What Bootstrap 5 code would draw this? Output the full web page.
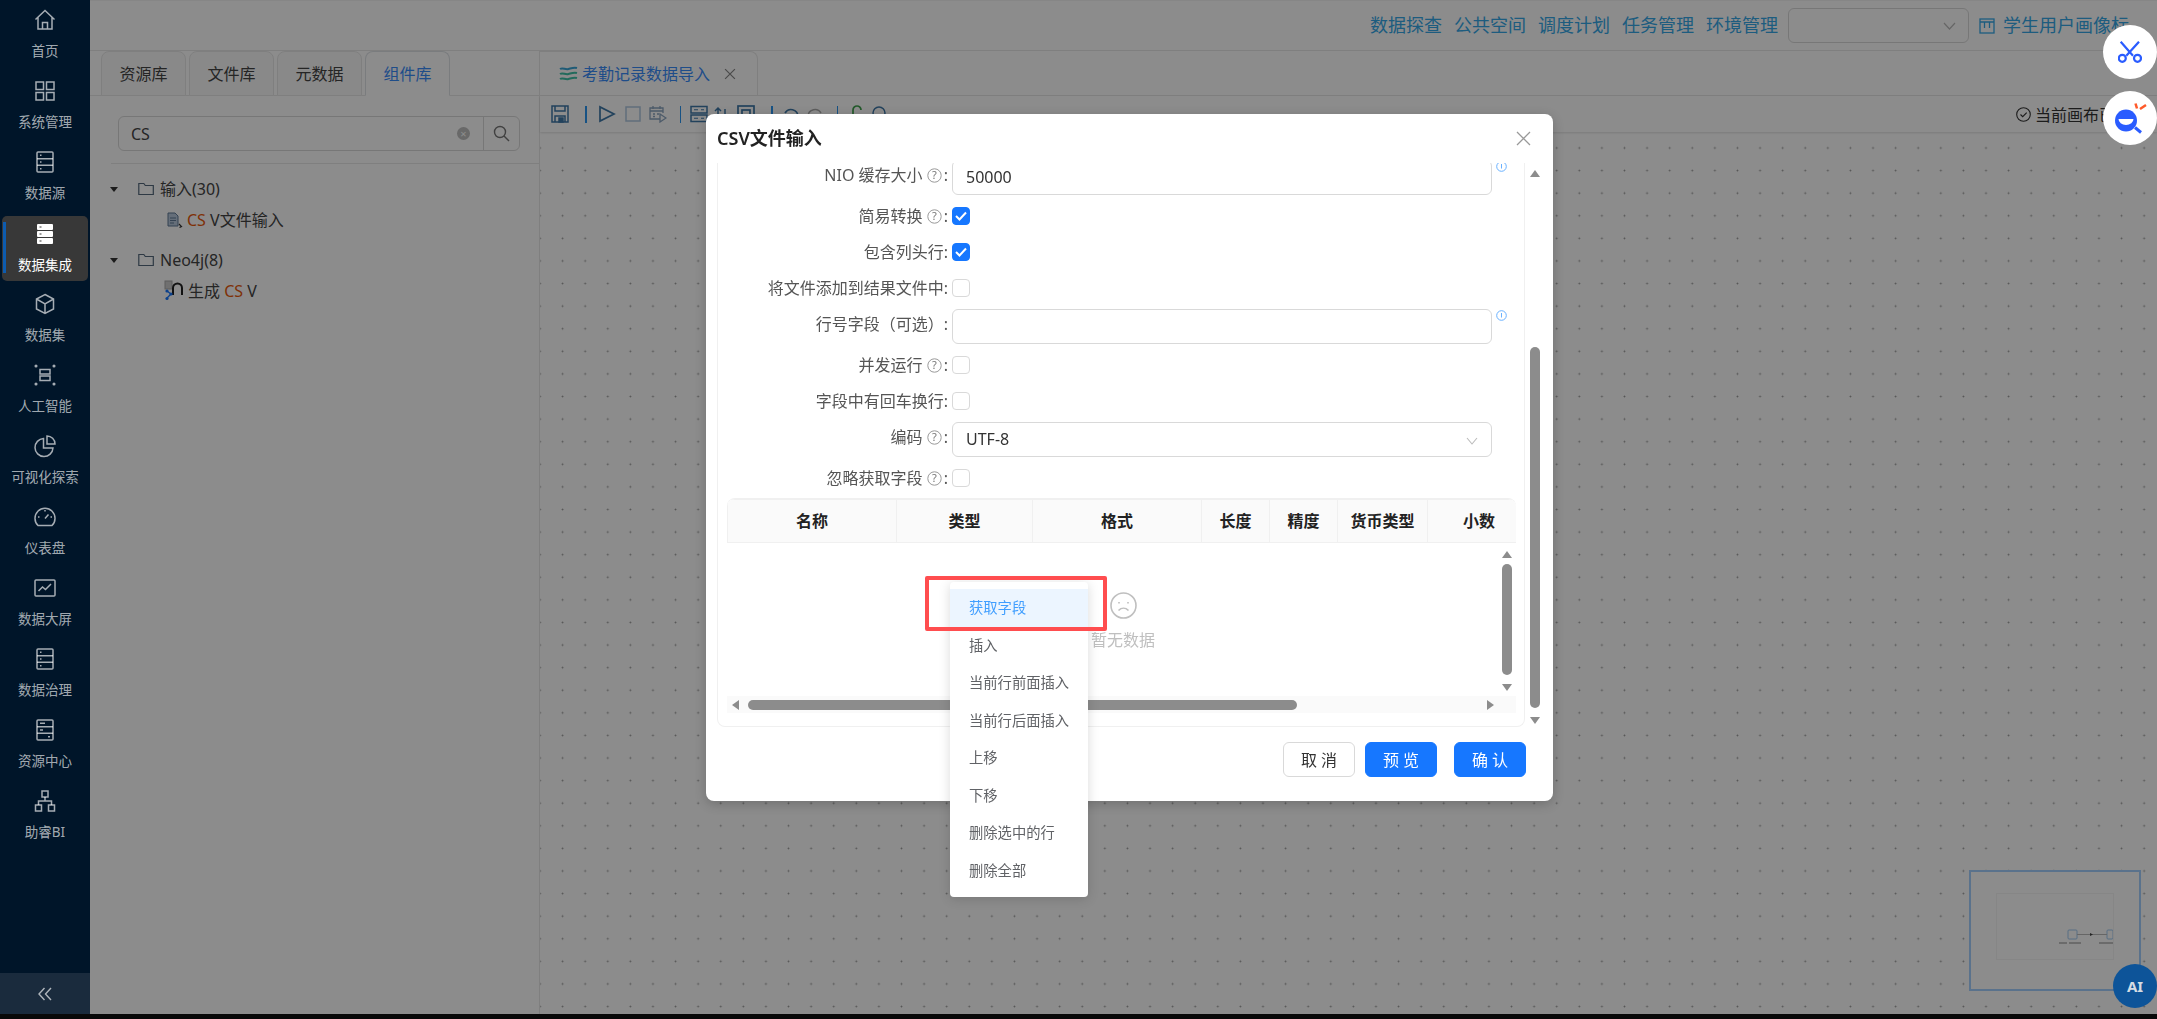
<!DOCTYPE html>
<html lang="zh">
<head>
<meta charset="UTF-8">
<title>CSV文件输入</title>
<link href="https://cdn.jsdelivr.net/npm/bootstrap@5.3.2/dist/css/bootstrap.min.css" rel="stylesheet">
<style>
  html, body { height: 100%; }
  body { font-family: "Noto Sans", "Noto Sans CJK SC", sans-serif; font-size: 16px; background: #121212; overflow: hidden; color: #333; }
  .shell { height: 1014px; }

  /* left menu sits above the dialog mask */
  .side-menu { width: 90px; background: #001529; position: relative; z-index: 1051; }
  .side-item { height: 71px; padding-top: 8px; color: rgba(255,255,255,.65); font-size: 13.5px; line-height: 18px; margin: 0 2px; border-radius: 5px; position: relative; white-space: nowrap; }
  .side-item svg { display: block; width: 24px; height: 24px; margin-bottom: 10px; }
  .side-item.on { color: #fff; background: #383838; height: 65px; margin-top: 3px; margin-bottom: 3px; padding-top: 6px; }
  .side-item.on::before { content: ""; position: absolute; left: 1px; top: 6px; bottom: 8px; width: 3px; background: #0d5cb0; }
  .side-fold { height: 41px; background: #1a2b3d; color: rgba(255,255,255,.65); }

  .main-area { background: #fff; border-top: 1px solid #f5f5f5; min-width: 0; }
  .top-bar { height: 50px; padding-right: 28px; border-bottom: 1px solid #e8e8e8; color: #35a8e8; font-size: 18px; gap: 12px; white-space: nowrap; }
  .top-select { width: 181px; height: 35px; margin: 0 -2px; border: 1px solid #d9d9d9; border-radius: 6px; padding-right: 12px; }

  .left-pane { width: 450px; border-right: 1px solid #e8e8e8; }
  .lib-tabs { padding-left: 11px; gap: 3px; height: 45px; --bs-nav-tabs-border-color: #e8e8e8; }
  .lib-tabs .nav-link { width: 85px; height: 45px; margin: 0; padding: 0; line-height: 44px; text-align: center; font-size: 16px; color: #444; background: #fafafa; border-color: #e8e8e8; border-radius: 8px 8px 0 0; }
  .lib-tabs .nav-link.active { color: #3a8cfa; background: #fff; border-bottom-color: #fff; }
  .search-line { margin: 20px 19px 0 28px; height: 35px; border: 1px solid #d9d9d9; border-radius: 6px; color: #444; }
  .search-line .clear-dot { width: 13px; height: 13px; border-radius: 50%; background: #bfbfbf; color: #fff; font-size: 11px; line-height: 13px; text-align: center; margin-right: 13px; }
  .search-btn { width: 36px; height: 100%; border-left: 1px solid #d9d9d9; }
  .tree-box { margin: 12px 0 0 21px; border-top: 1px solid #e8e8e8; padding-top: 12px; }
  .tree-row { height: 26px; line-height: 26px; color: #444; white-space: nowrap; }
  .tree-row.kid { margin-top: 5px; padding-left: 56px; }
  .tree-row.kid.neo { padding-left: 53px; }
  .tree-group { margin-bottom: 14px; }
  .caret-down { width: 0; height: 0; border: 4px solid transparent; border-top: 5px solid #333; border-bottom: 0; margin: 0 20px 0 -1px; }
  .folder-mark { margin-right: 6px; }
  .hit { color: #e8590c; }

  .edit-pane { min-width: 0; }
  .edit-tabs { height: 45px; border-bottom: 1px solid #e8e8e8; }
  .edit-tab { width: 218px; height: 44px; border: 1px solid #e8e8e8; border-bottom: 0; border-left: 0; border-radius: 0 8px 0 0; color: #3a8cfa; padding: 1px 0 0 19px; gap: 14px; }
  .tool-bar { height: 36px; padding-left: 11px; box-shadow: 0 1px 2px rgba(0,0,0,.12); color: #3f78a8; }
  .tool-sep { width: 1.5px; height: 17px; background: #2b96f0; }
  .tg6 { margin-left: 6px; } .tg8 { margin-left: 8px; } .tg9 { margin-left: 9px; }
  .tg11 { margin-left: 11px; } .tg13 { margin-left: 13px; } .tg16 { margin-left: 16px; }
  .saved-tip { margin-left: auto; padding: 1px 10px 0 0; color: #333; }
  .canvas-box { background-image: radial-gradient(circle, #9a9a9a 0.8px, transparent 1.1px); background-size: 22.6px 22.6px; background-position: -11.3px 4.7px; position: relative; }
  .mini-map { position: absolute; left: 1429px; top: 738px; width: 172px; height: 121px; border: 2px solid #a4d0ff; background: #fff; }
  .mini-sheet { width: 118px; height: 67px; margin: 21px 0 0 25px; border: 1px solid #f5f5f5; position: relative; }
  .mini-flow { position: absolute; left: 60px; top: 34px; }
  .ai-btn { position: absolute; left: 1573px; top: 832px; width: 44px; height: 44px; border-radius: 50%; background: #0d5499; color: #d5dce3; font-weight: 700; font-size: 15px; z-index: 1051; }
  .foot-strip { height: 5px; }

  .float-round { position: fixed; left: 2103px; width: 54px; height: 54px; border-radius: 50%; background: #fff; z-index: 1056; }

  /* dialog */
  .modal-backdrop { --bs-backdrop-opacity: .45; }
  .modal { overflow: hidden !important; }
  .modal-dialog.csv-dialog { max-width: none; width: 847px; margin: 114px 0 0 706px; }
  .csv-dialog .modal-content { height: 687px; border: 0; border-radius: 8px; box-shadow: 0 3px 12px rgba(0,0,0,.2); }
  .csv-dialog .modal-header { height: 49px; padding: 0 22px 0 11px; border: 0; justify-content: space-between; }
  .csv-dialog .modal-title { font-size: 18px; font-weight: 600; color: #222; }
  .csv-dialog .modal-body { padding: 0 9px 0 11px; height: 564px; flex: none; }
  .csv-dialog .modal-footer { height: 74px; padding: 15px 27px 0 0; border: 0; align-items: flex-start; gap: 10px; }
  .csv-dialog .modal-footer > * { margin: 0; }
  .csv-dialog .modal-footer > .btn-gap { margin-right: 7px; }
  .act-btn { width: 72px; height: 35px; padding: 0; font-size: 16px; border-radius: 6px; --bs-btn-bg: #1677ff; --bs-btn-border-color: #1677ff; }
  .act-btn.btn-light { background: #fff; border-color: #d9d9d9; color: #333; }

  .form-panel { width: 808px; border: 1px solid #f0f0f0; border-top: 0; border-radius: 0 0 8px 8px; overflow: hidden; }
  .form-flow { margin-top: -6px; }
  .field-row { height: 36px; }
  .field-row.tall { height: 41px; }
  .field-label { width: 230px; margin-right: 4px; flex: none; color: #555; text-align: right; white-space: nowrap; }
  .field-row.tall .field-label { padding-bottom: 5px; }
  .field-ctl { width: 540px; flex: none; }
  .fake-input { height: 35px; border: 1px solid #d9d9d9; border-radius: 6px; padding: 4px 13px 0; color: #333; }
  .info-mark { align-self: flex-start; margin: 4px 0 0 4px; }
  .help-mark { margin: -2px 2px 0 0; }
  .check-box { width: 18px; height: 18px; border: 1px solid #d9d9d9; border-radius: 4px; background: #fff; }
  .check-box.on { background: #1677ff; border-color: #1677ff; }

  .grid-wrap { margin: 2px 0 0 9px; width: 789px; height: 215px; border-radius: 8px 8px 0 0; overflow: hidden; border-top: 1px solid #f0f0f0; position: relative; }
  .grid-wrap .table { table-layout: fixed; width: 880px; margin: 0; --bs-table-border-color: #f0f0f0; }
  .grid-wrap th { height: 43px; background: #fafafa; padding: 0; text-align: center; vertical-align: middle; font-weight: 600; font-size: 16px; color: #222; }
  .last-col { width: 102px; }
  .empty-area { height: 171px; position: relative; }
  .empty-hint { position: absolute; left: 373px; top: 49px; width: 46px; color: #bfbfbf; white-space: nowrap; gap: 9px; }
  .bar-v { position: absolute; right: 0; top: 0; width: 18px; padding-top: 8px; }
  .bar-v .thumb-v { height: 111px; margin: 6px 0 9px; }
  .thumb-v { width: 10px; background: #8c8c8c; border-radius: 5px; }
  .bar-h { position: absolute; left: 0; right: 0; bottom: 0; height: 18px; background: #fafafa; padding: 0 22px 0 5px; }
  .thumb-h { width: 549px; height: 10px; background: #8c8c8c; border-radius: 5px; margin-left: 9px; }
  .arr { width: 0; height: 0; border: 5px solid transparent; }
  .arr.up { border-bottom: 7px solid #8c8c8c; border-top: 0; }
  .arr.dn { border-top: 7px solid #8c8c8c; border-bottom: 0; }
  .arr.lf { border-right: 7px solid #8c8c8c; border-left: 0; }
  .arr.rt { border-left: 7px solid #8c8c8c; border-right: 0; }
  .outer-scroll { width: 18px; margin-left: 1px; padding: 7px 0 3px; }
  .outer-scroll .thumb-v { margin-top: 170px; height: 361px; }

  .context-list { position: absolute; left: 244px; top: 468px; width: 138px; min-width: 0; display: block; padding: 7px 0 8px; border: 0; border-radius: 4px; box-shadow: 0 2px 12px rgba(0,0,0,.15); z-index: 5; }
  .context-list .dropdown-item { height: 37.5px; line-height: 37.5px; padding: 0 0 0 19px; font-size: 14.3px; color: #606266; }
  .context-list .dropdown-item.active { background: #ecf5ff; color: #409eff; }
  .red-mark { position: absolute; left: 219px; top: 462px; width: 182px; height: 55px; border: 4px solid #ff4d4f; border-radius: 2px; z-index: 6; }
</style>
</head>
<body>
<svg class="d-none">
  <symbol id="ico-help" viewBox="0 0 15 15"><circle cx="7.5" cy="7.5" r="6.7" fill="none" stroke="#999"/><text x="7.5" y="11.3" text-anchor="middle" font-size="11" fill="#777">?</text></symbol>
  <symbol id="ico-info" viewBox="0 0 11 11"><circle cx="5.5" cy="5.5" r="4.8" fill="none" stroke="#69b1ff"/><path d="M5.5 3v4.5" stroke="#69b1ff"/></symbol>
  <symbol id="ico-tick" viewBox="0 0 12 10"><path d="m1 5 3.5 3.5L11 1.500" fill="none" stroke="#fff" stroke-width="2"/></symbol>
  <symbol id="ico-folder" viewBox="0 0 16 14"><path d="M.8 12.500V1.500h5l1.500 2h8v9z" fill="none" stroke="#55697d" stroke-width="1.200"/></symbol>
  <symbol id="ico-server" viewBox="0 0 24 24"><rect x="4" y="2" width="16" height="20" rx="1" fill="none" stroke="currentColor" stroke-width="1.5"/><path d="M4 8.700h16M4 15.300h16M7 5.300h1.500M7 12h1.500M7 18.700h1.500" stroke="currentColor" stroke-width="1.5"/></symbol>
</svg>

<div class="shell d-flex">

  <nav class="side-menu d-flex flex-column flex-shrink-0">
    <div class="flex-grow-1">
      <div class="side-item d-flex flex-column align-items-center">
        <svg viewBox="0 0 24 24" fill="none" stroke="currentColor" stroke-width="1.5"><path d="M2.500 11.500 12 2.500l9.500 9M5 9.500V21h14V9.500M9.500 21v-6.500h5V21"/></svg>首页</div>
      <div class="side-item d-flex flex-column align-items-center">
        <svg viewBox="0 0 24 24" fill="none" stroke="currentColor" stroke-width="1.5"><rect x="3" y="3" width="7.500" height="7.500"/><rect x="13.500" y="3" width="7.500" height="7.500"/><rect x="3" y="13.500" width="7.500" height="7.500"/><rect x="13.500" y="13.500" width="7.500" height="7.500"/></svg>系统管理</div>
      <div class="side-item d-flex flex-column align-items-center">
        <svg viewBox="0 0 24 24"><use href="#ico-server"/></svg>数据源</div>
      <div class="side-item on d-flex flex-column align-items-center">
        <svg viewBox="0 0 24 24"><rect x="4" y="2" width="16" height="6" rx="1" fill="#fff"/><rect x="4" y="9" width="16" height="6" rx="1" fill="#fff"/><rect x="4" y="16" width="16" height="6" rx="1" fill="#fff"/><path d="M6.500 5h2M6.500 12h2M6.500 19h2" stroke="#383838" stroke-width="1.200"/></svg>数据集成</div>
      <div class="side-item d-flex flex-column align-items-center">
        <svg viewBox="0 0 24 24" fill="none" stroke="currentColor" stroke-width="1.5"><path d="M12 2.500 20.500 7v10L12 21.500 3.500 17V7zM3.500 7 12 12l8.500-5M12 12v9.500"/></svg>数据集</div>
      <div class="side-item d-flex flex-column align-items-center">
        <svg viewBox="0 0 24 24" fill="none" stroke="currentColor" stroke-width="1.5"><rect x="7" y="6.500" width="10" height="4.500"/><rect x="7" y="13" width="10" height="4.500"/><circle cx="3" cy="3" r=".8"/><circle cx="21" cy="3" r=".8"/><circle cx="3" cy="21" r=".8"/><circle cx="21" cy="21" r=".8"/></svg>人工智能</div>
      <div class="side-item d-flex flex-column align-items-center">
        <svg viewBox="0 0 24 24" fill="none" stroke="currentColor" stroke-width="1.5"><path d="M10.500 4.500a9 9 0 1 0 9.500 9.500h-9.500zM14 2v8h8a8 8 0 0 0-8-8z"/></svg>可视化探索</div>
      <div class="side-item d-flex flex-column align-items-center">
        <svg viewBox="0 0 24 24" fill="none" stroke="currentColor" stroke-width="1.5"><path d="M5 20.500a10 10 0 1 1 14 0zM12 13.500l3.500-4M12 5v1.500M5 12h1.500M17.500 12H19"/></svg>仪表盘</div>
      <div class="side-item d-flex flex-column align-items-center">
        <svg viewBox="0 0 24 24" fill="none" stroke="currentColor" stroke-width="1.5"><rect x="2" y="4" width="20" height="16" rx="1"/><path d="m5.500 15 4-4 3 2.500 5.500-5.500"/></svg>数据大屏</div>
      <div class="side-item d-flex flex-column align-items-center">
        <svg viewBox="0 0 24 24"><use href="#ico-server"/></svg>数据治理</div>
      <div class="side-item d-flex flex-column align-items-center">
        <svg viewBox="0 0 24 24" fill="none" stroke="currentColor" stroke-width="1.5"><rect x="4" y="2" width="16" height="20" rx="1"/><path d="M4 8.700h16M4 15.300h16M7 5.300h5M7 12h3M15 18.700h2"/></svg>资源中心</div>
      <div class="side-item d-flex flex-column align-items-center">
        <svg viewBox="0 0 24 24" fill="none" stroke="currentColor" stroke-width="1.5"><rect x="9" y="2" width="6" height="6"/><rect x="2.500" y="16" width="6" height="6"/><rect x="15.500" y="16" width="6" height="6"/><path d="M12 8v4M5.500 16v-4h13v4"/></svg>助睿BI</div>
    </div>
    <div class="side-fold d-flex align-items-center justify-content-center">
      <svg width="14" height="14" viewBox="0 0 14 14" fill="none" stroke="currentColor" stroke-width="1.4"><path d="M6.500 1 1 7l5.500 6M13 1 7.500 7l5.500 6"/></svg>
    </div>
  </nav>

  <div class="main-area flex-grow-1 d-flex flex-column">
    <header class="top-bar d-flex align-items-center justify-content-end flex-shrink-0">
      <span>数据探查</span><span>公共空间</span><span>调度计划</span><span>任务管理</span><span>环境管理</span>
      <div class="top-select d-flex align-items-center justify-content-end">
        <svg width="13" height="13" viewBox="0 0 13 13" fill="none" stroke="#bbb" stroke-width="1.2"><path d="m1 4 5.500 6L12 4"/></svg>
      </div>
      <span class="d-flex align-items-center gap-2">
        <svg width="16" height="16" viewBox="0 0 16 16" fill="none" stroke="currentColor" stroke-width="1.3"><rect x="1" y="1" width="14" height="14"/><path d="M1 4h14M5.500 4v6M10.500 4v6"/></svg>学生用户画像标</span>
    </header>

    <div class="d-flex flex-grow-1" style="min-height:0">
      <aside class="left-pane d-flex flex-column flex-shrink-0">
        <ul class="nav nav-tabs lib-tabs">
          <li class="nav-item"><a class="nav-link" href="#">资源库</a></li>
          <li class="nav-item"><a class="nav-link" href="#">文件库</a></li>
          <li class="nav-item"><a class="nav-link" href="#">元数据</a></li>
          <li class="nav-item"><a class="nav-link active" href="#">组件库</a></li>
        </ul>
        <div class="search-line d-flex align-items-center">
          <span class="ps-2 ms-1 flex-grow-1">CS</span>
          <span class="clear-dot">×</span>
          <span class="search-btn d-flex align-items-center justify-content-center">
            <svg width="17" height="17" viewBox="0 0 17 17" fill="none" stroke="#777" stroke-width="1.4"><circle cx="7" cy="7" r="5.500"/><path d="m11 11 5 5"/></svg>
          </span>
        </div>
        <div class="tree-box">
          <div class="tree-group">
            <div class="tree-row d-flex align-items-center">
              <span class="caret-down"></span>
              <svg class="folder-mark" width="16" height="14"><use href="#ico-folder"/></svg>输入(30)</div>
            <div class="tree-row kid d-flex align-items-center">
              <svg class="me-1" width="16" height="16" viewBox="0 0 16 16"><path d="M1 1h7l3 3v10H1z" fill="#b8c8dc" stroke="#5f7896"/><path d="M3 6h6M3 8.500h6M3 11h4" stroke="#5f7896"/><path d="m12 12 2.500 2.500-2 1" fill="none" stroke="#333" stroke-width="1.200"/></svg><span class="hit">CS</span>&nbsp;V文件输入</div>
          </div>
          <div class="tree-group">
            <div class="tree-row d-flex align-items-center">
              <span class="caret-down"></span>
              <svg class="folder-mark" width="16" height="14"><use href="#ico-folder"/></svg>Neo4j(8)</div>
            <div class="tree-row kid neo d-flex align-items-center">
              <svg class="me-1" width="20" height="22" viewBox="0 0 20 22"><rect x="1" y="1" width="7" height="8" fill="#ccc" stroke="#aaa"/><path d="M9 15V8a4.500 4.500 0 0 1 9 0v7" fill="none" stroke="#222" stroke-width="2"/><path d="m7 14-4-3M7 14l-4 4" stroke="#1677ff" stroke-width="1.300"/><circle cx="3" cy="11" r="1.600" fill="#1677ff"/><circle cx="3" cy="18.500" r="1.600" fill="#1677ff"/><circle cx="7" cy="14" r="1.600" fill="#1677ff"/></svg>生成&nbsp;<span class="hit">CS</span>&nbsp;V</div>
          </div>
        </div>
      </aside>

      <section class="edit-pane flex-grow-1 d-flex flex-column">
        <div class="edit-tabs flex-shrink-0">
          <div class="edit-tab d-flex align-items-center">
            <span class="d-flex align-items-center gap-1 text-nowrap">
              <svg width="19" height="16" viewBox="0 0 19 16" fill="none" stroke-width="2"><path d="M1 3c3-2 5 1 8.500 0S15 1 18 2" stroke="#3aa7d8"/><path d="M1 8c3-2 5 1 8.500 0S15 6 18 7" stroke="#3fc3a8"/><path d="M1 13c3-2 5 1 8.500 0S15 11 18 12" stroke="#3fc3a8"/></svg>考勤记录数据导入</span>
            <svg width="12" height="12" viewBox="0 0 11 11" stroke="#888" stroke-width="1.100"><path d="m1 1 9 9M10 1l-9 9"/></svg>
          </div>
        </div>
        <div class="tool-bar d-flex align-items-center flex-shrink-0">
          <svg width="18" height="18" viewBox="0 0 18 18" fill="none" stroke="currentColor" stroke-width="1.500"><path d="M1 1h16v16H1zM4 1v5h10V1M4 17v-6h10v6"/><rect x="8" y="13" width="4" height="4" fill="currentColor"/></svg>
          <span class="tool-sep tg16"></span>
          <svg class="tg11" width="18" height="18" viewBox="0 0 18 18" fill="none" stroke="currentColor" stroke-width="1.700"><path d="M2 2v14l14-7z"/></svg>
          <svg class="tg9" width="16" height="16" viewBox="0 0 16 16" fill="none" stroke="#b0c8e0" stroke-width="1.500"><rect x="1" y="1" width="14" height="14"/></svg>
          <svg class="tg8" width="18" height="18" viewBox="0 0 18 18" fill="none" stroke="#8aa4bf" stroke-width="1.300"><path d="M11 14H1V3h13v5M1 6h13M4 1v3M11 1v3M4 9h2M8 9h2M4 11.500h2"/><path d="m11 9 6 4-6 4z"/></svg>
          <span class="tool-sep tg13"></span>
          <svg class="tg9" width="18" height="18" viewBox="0 0 18 18" fill="none" stroke="currentColor" stroke-width="1.500"><rect x="1" y="1.500" width="16" height="6.500"/><rect x="1" y="10" width="16" height="6.500"/><path d="M4 4.700h4M11 4.700h3M4 13.200h4M11 13.200h3" stroke-width="1.100"/></svg>
          <svg class="tg6" width="15" height="18" viewBox="0 0 15 18" fill="none" stroke="currentColor" stroke-width="1.500"><path d="M4 17V3M1 6l3-3 3 3M11 4v10"/></svg>
          <svg class="tg8" width="18" height="18" viewBox="0 0 18 18" fill="none" stroke="currentColor" stroke-width="1.700"><rect x="1" y="1" width="16" height="16"/><rect x="5" y="5" width="8" height="8"/></svg>
          <span class="tool-sep tg16"></span>
          <svg class="tg9" width="18" height="18" viewBox="0 0 18 18" fill="none" stroke="currentColor" stroke-width="1.700"><path d="M3 8a7 7 0 0 1 13 3"/></svg>
          <svg class="tg6" width="18" height="18" viewBox="0 0 18 18" fill="none" stroke="#aaa" stroke-width="1.500"><path d="M15 8A7 7 0 0 0 2 11"/></svg>
          <span class="tool-sep tg13"></span>
          <svg class="tg13" width="12" height="18" viewBox="0 0 12 18" fill="none" stroke="#3fa34d" stroke-width="1.700"><path d="M10 5a4 4 0 0 0-8 0v8"/></svg>
          <svg class="tg8" width="18" height="18" viewBox="0 0 18 18" fill="none" stroke="currentColor" stroke-width="1.500"><circle cx="8" cy="8" r="6"/></svg>
          <span class="saved-tip d-flex align-items-center gap-1 text-nowrap">
            <svg width="15" height="15" viewBox="0 0 15 15" fill="none" stroke="#333" stroke-width="1.100"><circle cx="7.500" cy="7.500" r="6.800"/><path d="m4.500 7.500 2.200 2.200 4-4"/></svg>当前画布已保存</span>
        </div>
        <div class="canvas-box flex-grow-1">
          <div class="mini-map">
            <div class="mini-sheet">
              <svg class="mini-flow" width="56" height="18" viewBox="0 0 56 18" fill="none"><rect x="11" y="2" width="9" height="9" rx="1" stroke="#9ec9ef"/><rect x="50" y="2" width="6" height="9" rx="1" stroke="#9ec9ef"/><path d="M20 6.500h30" stroke="#bbb"/><path d="m33 5 3 1.500-3 1.500z" fill="#444"/><path d="M2 15h8M12 15h12M42 15h14" stroke="#888"/></svg>
            </div>
          </div>
          <div class="ai-btn d-flex align-items-center justify-content-center">AI</div>
        </div>
      </section>
    </div>
  </div>
</div>
<div class="foot-strip"></div>

<div class="modal-backdrop show"></div>
<div class="float-round d-flex align-items-center justify-content-center" style="top:25px">
  <svg width="24" height="22" viewBox="0 0 24 22" fill="none" stroke="#2a5cff" stroke-width="2.200"><circle cx="4.300" cy="17.300" r="3.500"/><circle cx="19.500" cy="17.300" r="3.500"/><path d="M2.700.7 15 14.700M21 .7 8.300 14.700"/></svg>
</div>
<div class="float-round d-flex align-items-center justify-content-center" style="top:91px">
  <svg width="34" height="36" viewBox="0 0 34 36"><circle cx="13" cy="20.500" r="11" fill="#2a5cff"/><path d="M5.500 19h15a7.500 6 0 0 1-15 0z" fill="#fff"/><path d="m22 27.500 6 5" stroke="#2a5cff" stroke-width="3"/><path d="m22.500 3.500 1.500 5M33 5l-6 4" stroke="#ff5a2a" stroke-width="2.500"/></svg>
</div>

<div class="modal d-block">
  <div class="modal-dialog csv-dialog">
    <div class="modal-content">
      <div class="modal-header">
        <h5 class="modal-title">CSV文件输入</h5>
        <svg width="15" height="15" viewBox="0 0 15 15" stroke="#999" stroke-width="1.300"><path d="m1 1 13 13M14 1 1 14"/></svg>
      </div>
      <div class="modal-body d-flex">
        <div class="form-panel">
          <div class="form-flow">
            <div class="field-row tall d-flex align-items-center">
              <div class="field-label">NIO 缓存大小 <svg class="help-mark" width="15" height="15"><use href="#ico-help"/></svg>:</div>
              <div class="field-ctl fake-input">50000</div>
              <svg class="info-mark" width="11" height="11"><use href="#ico-info"/></svg>
            </div>
            <div class="field-row d-flex align-items-center">
              <div class="field-label">简易转换 <svg class="help-mark" width="15" height="15"><use href="#ico-help"/></svg>:</div>
              <span class="check-box on d-flex align-items-center justify-content-center"><svg width="12" height="10"><use href="#ico-tick"/></svg></span>
            </div>
            <div class="field-row d-flex align-items-center">
              <div class="field-label">包含列头行:</div>
              <span class="check-box on d-flex align-items-center justify-content-center"><svg width="12" height="10"><use href="#ico-tick"/></svg></span>
            </div>
            <div class="field-row d-flex align-items-center">
              <div class="field-label">将文件添加到结果文件中:</div>
              <span class="check-box"></span>
            </div>
            <div class="field-row tall d-flex align-items-center">
              <div class="field-label">行号字段（可选）:</div>
              <div class="field-ctl fake-input"></div>
              <svg class="info-mark" width="11" height="11"><use href="#ico-info"/></svg>
            </div>
            <div class="field-row d-flex align-items-center">
              <div class="field-label">并发运行 <svg class="help-mark" width="15" height="15"><use href="#ico-help"/></svg>:</div>
              <span class="check-box"></span>
            </div>
            <div class="field-row d-flex align-items-center">
              <div class="field-label">字段中有回车换行:</div>
              <span class="check-box"></span>
            </div>
            <div class="field-row tall d-flex align-items-center">
              <div class="field-label">编码 <svg class="help-mark" width="15" height="15"><use href="#ico-help"/></svg>:</div>
              <div class="field-ctl fake-input d-flex justify-content-between">UTF-8
                <svg class="mt-2" width="12" height="12" viewBox="0 0 12 12" fill="none" stroke="#bbb" stroke-width="1.100"><path d="m1 3 5 6 5-6"/></svg>
              </div>
            </div>
            <div class="field-row d-flex align-items-center">
              <div class="field-label">忽略获取字段 <svg class="help-mark" width="15" height="15"><use href="#ico-help"/></svg>:</div>
              <span class="check-box"></span>
            </div>
          </div>
          <div class="grid-wrap">
            <table class="table table-bordered">
              <colgroup><col style="width:169px"><col style="width:136px"><col style="width:169px"><col style="width:68px"><col style="width:68px"><col style="width:90px"><col style="width:180px"></colgroup>
              <thead><tr><th>名称</th><th>类型</th><th>格式</th><th>长度</th><th>精度</th><th>货币类型</th><th><span class="last-col d-block">小数</span></th></tr></thead>
            </table>
            <div class="empty-area">
              <div class="empty-hint d-flex flex-column align-items-center">
                <svg width="27" height="27" viewBox="0 0 27 27" fill="none" stroke="#bfbfbf" stroke-width="1.600"><circle cx="13.500" cy="13.500" r="12.500"/><path d="M8.500 18.500c3-3 7-3 10 0M9 10v1.500M18 10v1.500"/></svg>
                <span>暂无数据</span>
              </div>
              <div class="bar-v d-flex flex-column align-items-center">
                <span class="arr up"></span>
                <span class="thumb-v"></span>
                <span class="arr dn"></span>
              </div>
              <div class="bar-h d-flex align-items-center">
                <span class="arr lf"></span>
                <span class="thumb-h"></span>
                <span class="arr rt ms-auto"></span>
              </div>
            </div>
          </div>
        </div>
        <div class="outer-scroll d-flex flex-column align-items-center">
          <span class="arr up"></span>
          <span class="thumb-v"></span>
          <span class="arr dn mt-auto"></span>
        </div>
      </div>
      <div class="modal-footer">
        <button class="btn btn-light act-btn" type="button">取 消</button>
        <button class="btn btn-primary act-btn btn-gap" type="button">预 览</button>
        <button class="btn btn-primary act-btn" type="button">确 认</button>
      </div>
      <ul class="dropdown-menu context-list list-unstyled m-0">
        <li><a class="dropdown-item active" href="#">获取字段</a></li>
        <li><a class="dropdown-item" href="#">插入</a></li>
        <li><a class="dropdown-item" href="#">当前行前面插入</a></li>
        <li><a class="dropdown-item" href="#">当前行后面插入</a></li>
        <li><a class="dropdown-item" href="#">上移</a></li>
        <li><a class="dropdown-item" href="#">下移</a></li>
        <li><a class="dropdown-item" href="#">删除选中的行</a></li>
        <li><a class="dropdown-item" href="#">删除全部</a></li>
      </ul>
      <div class="red-mark"></div>
    </div>
  </div>
</div>
<script src="https://cdn.jsdelivr.net/npm/bootstrap@5.3.2/dist/js/bootstrap.bundle.min.js"></script>
</body>
</html>
